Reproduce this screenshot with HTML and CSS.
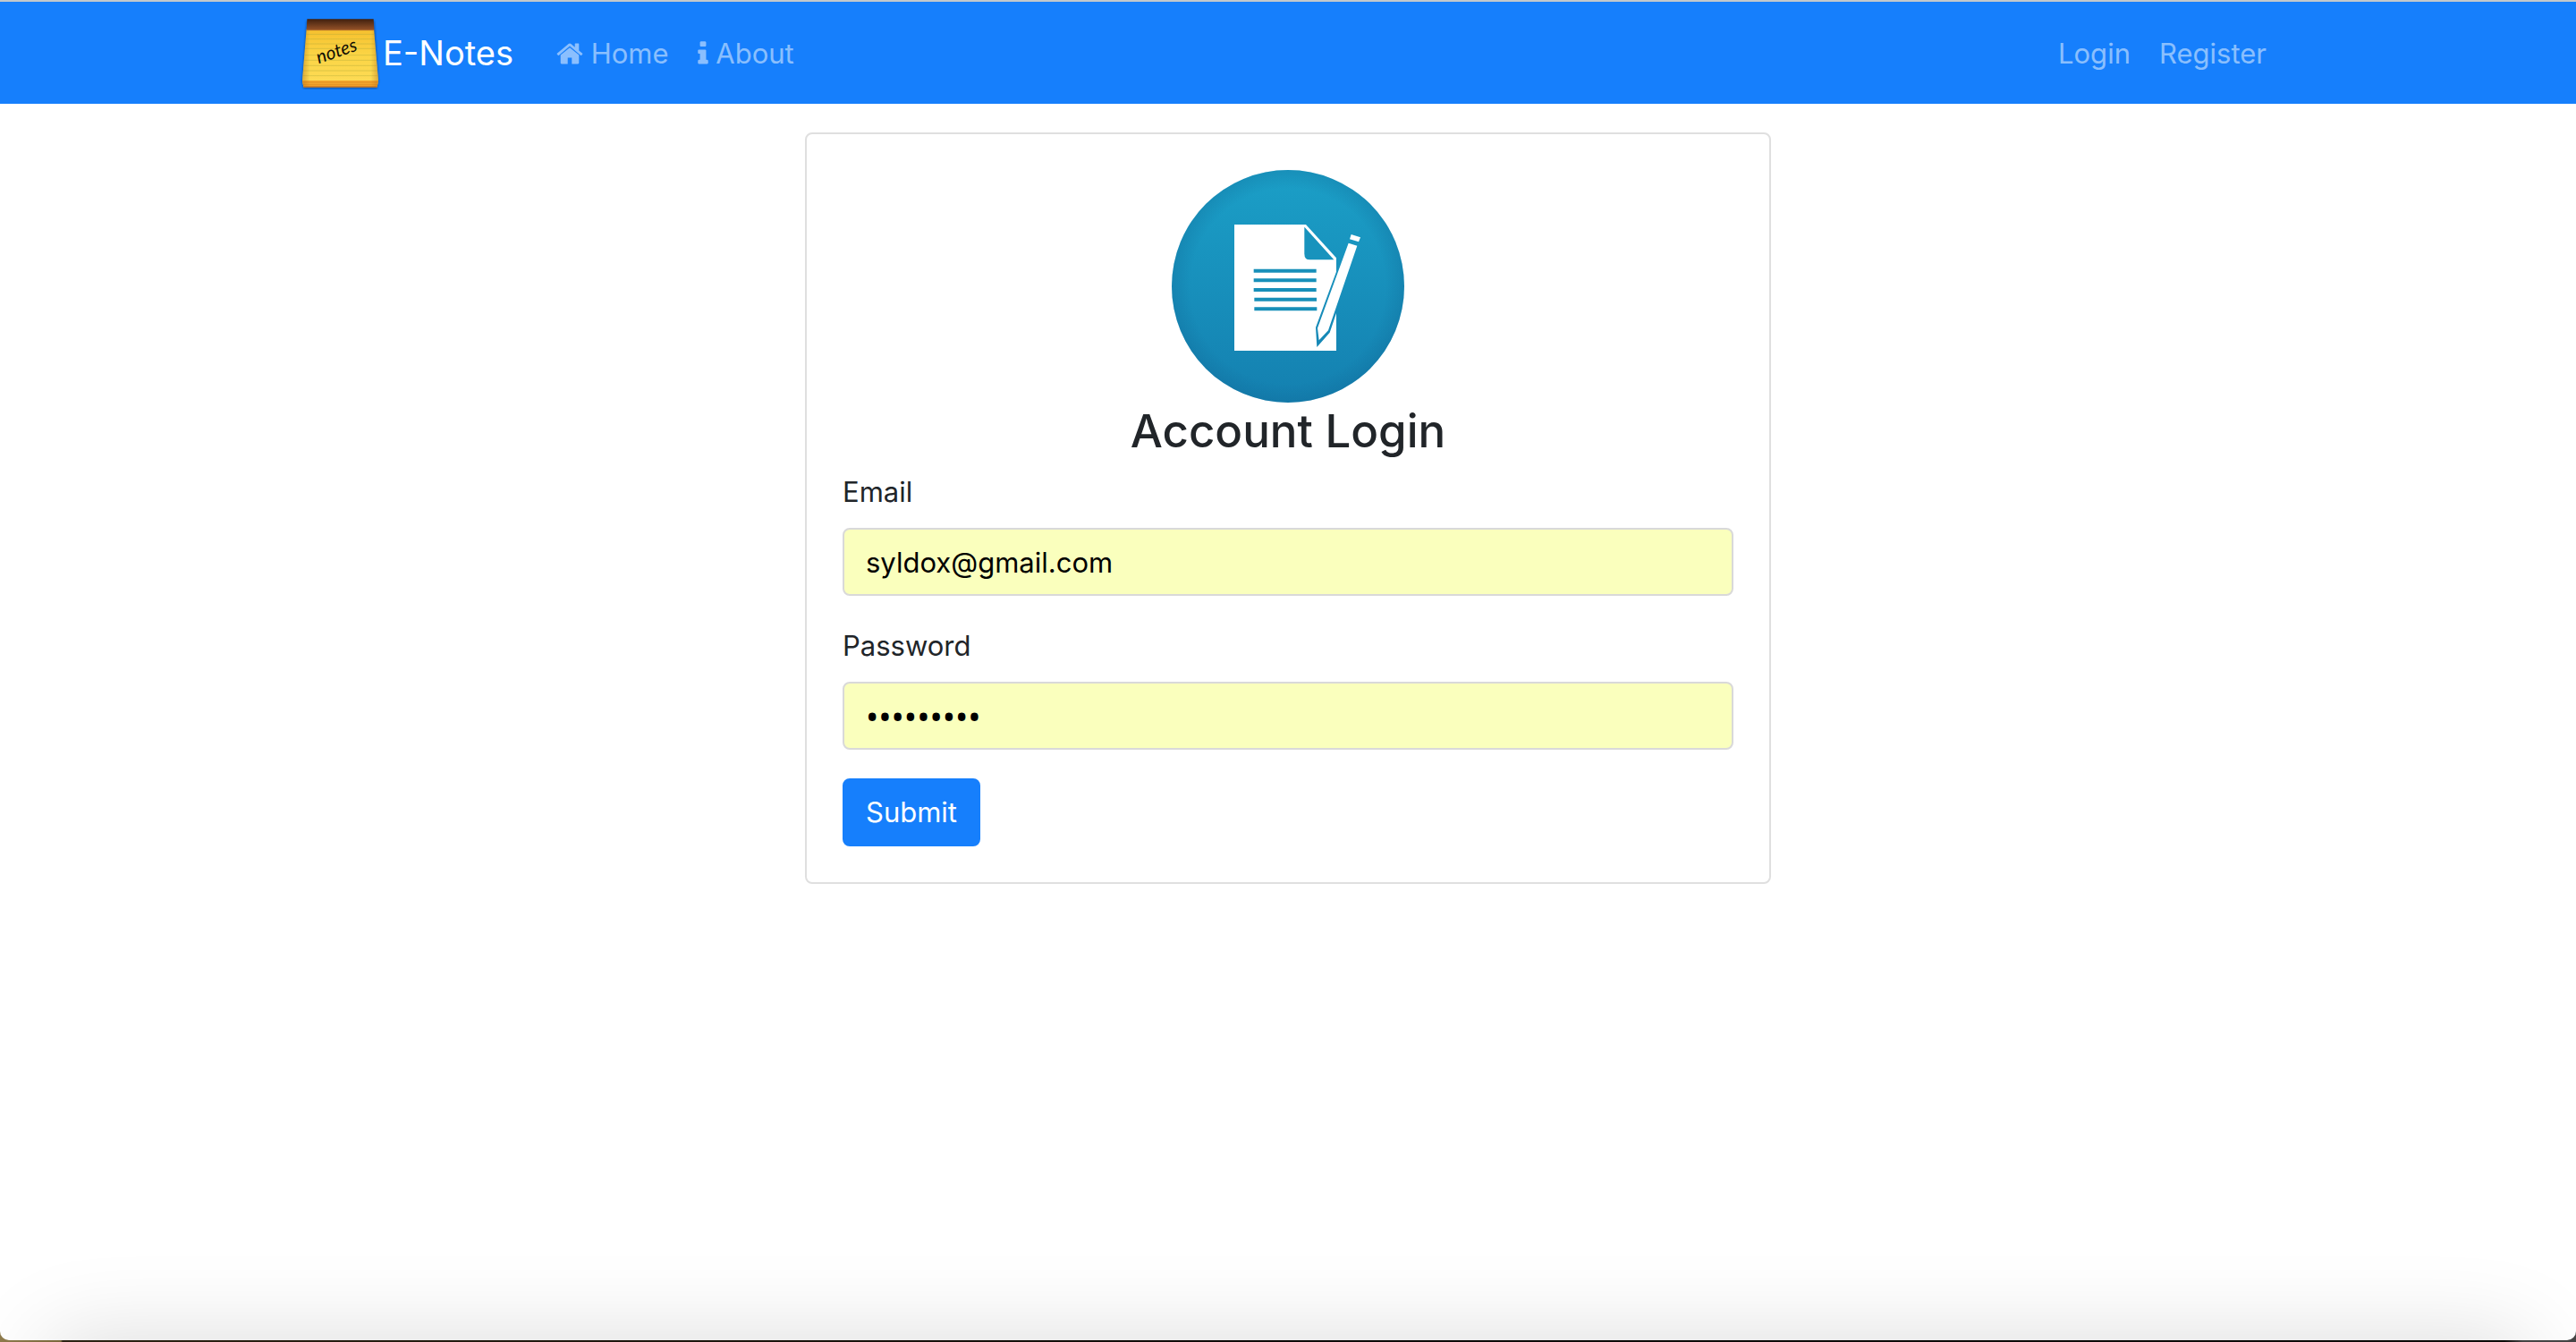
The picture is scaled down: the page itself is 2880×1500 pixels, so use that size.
FILE: index.html
```html
<!DOCTYPE html>
<html lang="en">
<head>
<meta charset="utf-8">
<meta name="viewport" content="width=device-width, initial-scale=1">
<title>E-Notes</title>
<link rel="stylesheet" href="styles.css">
</head>
<body>
<div class="window">
  <header class="navbar">
    <nav class="container navbar-inner" aria-label="Main">
      <a class="brand" href="#">
        <svg class="brand-logo" viewBox="0 24 294 246" aria-hidden="true">
          <defs>
            <linearGradient id="paper" x1="0" y1="0" x2="0" y2="1">
              <stop offset="0" stop-color="#f6c02e"/>
              <stop offset=".45" stop-color="#fbd545"/>
              <stop offset="1" stop-color="#fddc58"/>
            </linearGradient>
            <linearGradient id="side" x1="0" y1="0" x2="1" y2="0">
              <stop offset="0" stop-color="#b4701a" stop-opacity=".45"/>
              <stop offset=".1" stop-color="#b4701a" stop-opacity="0"/>
              <stop offset=".9" stop-color="#b4701a" stop-opacity="0"/>
              <stop offset="1" stop-color="#b4701a" stop-opacity=".45"/>
            </linearGradient>
            <linearGradient id="leather" x1="0" y1="0" x2="0" y2="1">
              <stop offset="0" stop-color="#40200f"/>
              <stop offset="1" stop-color="#965328"/>
            </linearGradient>
            <filter id="soft" x="-10%" y="-10%" width="120%" height="120%"><feGaussianBlur stdDeviation="3"/></filter>
          </defs>
          <path d="M38 40H266L280 244L274 268H28L22 244Z" fill="#0a3c80" opacity=".6" filter="url(#soft)"/>
          <path d="M38 68H264L279 240L275 262H28L24 240Z" fill="url(#paper)"/>
          <path d="M24 240H279L275 262H28Z" fill="#f3a62d"/>
          <path d="M25 246H278M27 254H276" stroke="#d98a1f" stroke-width="2"/>
          <path d="M28 261H275" stroke="#b85f18" stroke-width="3"/>
          <path d="M37 85H266M36 101H267M34 117H269M33 133H270M32 155H271M31 172H273M29 190H274M27 207H276M26 224H277" stroke="#a9a437" stroke-width="1.6" opacity=".7"/>
          <path d="M38 68H264L279 240L275 262H28L24 240Z" fill="url(#side)"/>
          <path d="M40 34H263L265 71H38Z" fill="url(#leather)"/>
          <path d="M38 71H265" stroke="#b06a2c" stroke-width="2"/>
          <text class="brand-script" x="79" y="184" transform="rotate(-19 79 184)">notes</text>
        </svg>
        <span>E-Notes</span>
      </a>
      <ul class="nav-list">
        <li><a class="nav-link" href="#"><svg class="icon icon-home" viewBox="0 0 1664 1792" aria-hidden="true"><path d="M1408 992v480q0 26-19 45t-45 19H960v-384H704v384H320q-26 0-45-19t-19-45V992q0-1 .5-3t.5-3l575-474 575 474q1 2 1 6zm223-69l-62 74q-8 9-21 11h-3q-13 0-21-7L832 424 140 1001q-12 8-24 7-13-2-21-11l-62-74q-8-10-7-23.500t11-21.500l719-599q32-26 76-26t76 26l244 204V288q0-14 9-23t23-9h192q14 0 23 9t9 23v408l219 182q10 8 11 21.500t-7 23.500z"/></svg> Home</a></li>
        <li><a class="nav-link" href="#"><svg class="icon icon-info" viewBox="0 0 640 1792" aria-hidden="true"><path d="M640 1344v128q0 26-19 45t-45 19H64q-26 0-45-19t-19-45v-128q0-26 19-45t45-19h64V896H64q-26 0-45-19T0 832V704q0-26 19-45t45-19h384q26 0 45 19t19 45v576h64q26 0 45 19t19 45zM512 192v192q0 26-19 45t-45 19H192q-26 0-45-19t-19-45V192q0-26 19-45t45-19h256q26 0 45 19t19 45z"/></svg> About</a></li>
      </ul>
      <ul class="nav-list nav-end">
        <li><a class="nav-link" href="#">Login</a></li>
        <li><a class="nav-link" href="#">Register</a></li>
      </ul>
    </nav>
  </header>
  <main class="container">
    <section class="card">
      <svg class="card-logo" viewBox="210 30 780 780" aria-hidden="true">
        <defs>
          <linearGradient id="disc" x1="0" y1="0" x2="0" y2="1">
            <stop offset="0" stop-color="#1b9fc7"/>
            <stop offset="1" stop-color="#1480b0"/>
          </linearGradient>
          <radialGradient id="rim">
            <stop offset=".84" stop-color="#0f6290" stop-opacity="0"/>
            <stop offset="1" stop-color="#0f6290" stop-opacity=".26"/>
          </radialGradient>
        </defs>
        <circle cx="600" cy="420" r="390" fill="url(#disc)"/>
        <circle cx="600" cy="420" r="390" fill="url(#rim)"/>
        <path fill="#fff" d="M420 213H660L762 325V371L693 558L697 624L740 575L762 510V636H420Z"/>
        <path fill="#1893bd" d="M655 221L754 331H673Q655 331 655 311Z"/>
        <path fill="none" stroke="#178fb9" stroke-width="12" d="M485 368H695M485 400H695M485 432H695M487 464H696M487 496H697"/>
        <path fill="#fff" d="M803 275L832 284L735 568L704 601L699 560ZM812 246L843 256L837 271L807 262Z"/>
      </svg>
      <h1 class="card-title">Account Login</h1>
      <form class="form">
        <div class="field">
          <label for="email">Email</label>
          <input class="control" id="email" type="email" value="syldox@gmail.com">
        </div>
        <div class="field">
          <label for="password">Password</label>
          <input class="control control-password" id="password" type="password" value="notes1234">
        </div>
        <button class="btn" type="submit">Submit</button>
      </form>
    </section>
  </main>
</div>
</body>
</html>
```
FILE: styles.css
```css
*,
*::before,
*::after {
  box-sizing: border-box;
}

body {
  margin: 0;
  font-family: Inter, "Liberation Sans", sans-serif;
  font-size: 31px;
  line-height: 48px;
  color: #212529;
  background: linear-gradient(90deg, #8d7a4b 0, #7a683c 68px, #2c2212 70px, #0c0907 50%, #0c0907 2800px, #444 2820px);
}

.window {
  position: relative;
  min-height: calc(100vh - 2px);
  margin-bottom: 2px;
  overflow: hidden;
  background: #fff;
  border-radius: 0 0 10px 10px;
}

/* soft shade along the bottom edge of the window */
.window::after {
  content: "";
  position: absolute;
  right: 55px;
  bottom: -120px;
  left: 55px;
  height: 120px;
  box-shadow: 0 0 100px rgba(0, 0, 0, .15);
  pointer-events: none;
}

.container {
  width: 100%;
  max-width: 2280px;
  margin: 0 auto;
  padding: 0 30px;
}

.navbar {
  padding: 16px 0;
  background: #167ffc;
  border-top: 2px solid #c3c8cb;
}

.navbar-inner {
  display: flex;
  align-items: center;
}

.brand {
  display: flex;
  align-items: center;
  margin-right: 32px;
  font-size: 38px;
  color: #fff;
  text-decoration: none;
}

.brand-logo {
  width: 98px;
  height: 82px;
}

.brand-script {
  font-family: Lato, sans-serif;
  font-size: 62px;
  font-style: italic;
  fill: #110d04;
}

.nav-list {
  display: flex;
  margin: 0;
  padding: 2px 0 0;
  list-style: none;
}

.nav-end {
  margin-left: auto;
}

.nav-link {
  display: block;
  padding: 0 16px;
  color: rgba(255, 255, 255, .5);
  text-decoration: none;
}

.icon {
  height: 32px;
  fill: currentColor;
  vertical-align: -5px;
}

.icon-home {
  width: 30px;
}

.icon-info {
  width: 12px;
}

.card {
  width: 100%;
  max-width: 1080px;
  margin: 32px auto;
  padding: 40px;
  border: 2px solid #dfdfdf;
  border-radius: 8px;
}

.card-logo {
  display: block;
  width: 260px;
  height: 260px;
  margin: 0 auto;
}

.card-title {
  margin: 0 0 12px;
  font-size: 51px;
  font-weight: 500;
  line-height: 64px;
  text-align: center;
}

.form {
  display: flex;
  flex-direction: column;
  gap: 32px;
}

.field {
  display: flex;
  flex-direction: column;
  gap: 16px;
}

.control {
  width: 100%;
  height: 76px;
  padding: 12px 24px;
  font: inherit;
  color: #000;
  background: #faffbd;
  border: 2px solid #d9d9d9;
  border-radius: 8px;
}

.control-password {
  font-family: "Noto Sans", sans-serif;
  font-size: 38px;
}

.btn {
  align-self: flex-start;
  padding: 12px 24px;
  font: inherit;
  color: #fff;
  background: #167ffc;
  border: 2px solid #167ffc;
  border-radius: 8px;
}
```
